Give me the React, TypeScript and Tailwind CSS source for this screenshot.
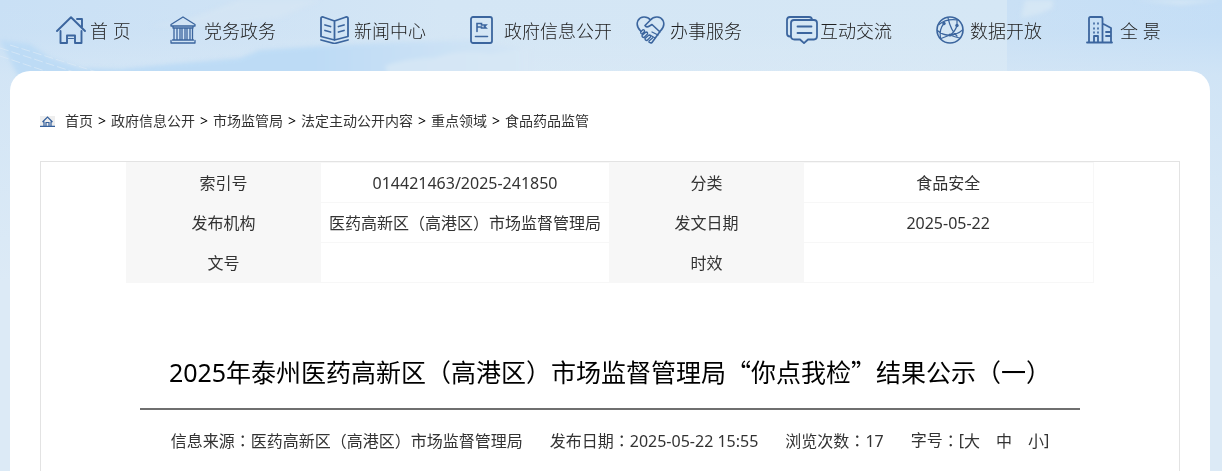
import { Fragment, type ReactNode } from "react";

function Icon({ width, children }: { width: number; children: ReactNode }) {
  return (
    <svg
      width={width}
      height={28}
      viewBox={`0 0 ${width} 28`}
      fill="none"
      stroke="#3b659e"
      strokeWidth={1.8}
      strokeLinecap="round"
      strokeLinejoin="round"
      aria-hidden="true"
    >
      {children}
    </svg>
  );
}

const HomeIcon = (
  <Icon width={30}>
    <path d="M1 15 15 1.2 29 15M21 3h5V11M4.500 15v12h6.500v-7.500h8V27h6.500V15" strokeWidth={1.9} />
    <path d="M12.500 22.500h5" strokeWidth={1} />
  </Icon>
);
const HallIcon = (
  <Icon width={26}>
    <path d="M1 8.500 13 1l12 7.500v1.500H1zM3 10v2h20v-2M4 12v12M7 12v12M10 12v12M12 12v12M15 12v12M17 12v12M20 12v12M22.500 12v12M2.500 24h21M1 24.500V27h24v-2.500" strokeWidth={1.3} />
  </Icon>
);
const BookIcon = (
  <Icon width={29}>
    <path d="M14.500 5 3 1Q1 .7 1 2.500V20.500l13.500 3.500L28 20.500V2.500Q28 .7 26 1zM14.500 5V24M5 9l5.500 1.500M5 14.500l5.500 1.500M24 9l-5.500 1.500M24 14.500 18.500 16M1 24l13.500 3.500L28 24" />
  </Icon>
);
const FlagIcon = (
  <Icon width={23}>
    <rect x="1" y="1" width="21" height="26" rx="2" />
    <path d="M7 15.500V7.500h4.500v1.500H16l-1.500 1.500L16 12h-4.500v-1H7M5.500 20.500h12" strokeLinejoin="miter" strokeWidth={1.6} />
  </Icon>
);
const HandshakeIcon = (
  <Icon width={29}>
    <path d="M14.500 4C11-.2 4.500.2 2 4.500-.2 9 1.500 12 5 15.500M14.500 4C18-.2 24.500.2 27 4.500c2.200 4.500.5 7.500-3 11L16 26.500q-1.500 1-3-.5M14.500 4 9 9.500q1.500 2.500 4.500.500L16 8.500l8 7.500" strokeWidth={1.6} />
    <path d="M5 15.500l2-1.800q1.800 0 1.500 1.800l-2.500 2.500Q4 17.500 5 15.500M6 19.500l4-3.500q2 0 1.500 2L8 21.500q-2 0-2-2M9 22.500l4-3.500q2 0 1.500 2L11 24.500q-2 0-2-2M13 25l3.500-3M16 16l6 3M14 19l5 3" strokeWidth={1.3} />
  </Icon>
);
const ChatIcon = (
  <Icon width={32}>
    <path d="M4 20.500Q1 20.500 1 17.500V4q0-3 3-3h19q3 0 3 3M8 4h20q3 0 3 3v13q0 3.500-3 3.500h-6L18 27.200 14 23.500H8.500Q5 23.500 5 20V7q0-3 3-3zM11.500 10.500h14M11.500 17h14" strokeWidth={1.8} />
  </Icon>
);
const GlobeIcon = (
  <Icon width={28}>
    <circle cx="14" cy="14" r="13" strokeWidth={1.6} />
    <path d="M3 8.500q7-6.500 19.500-4.500M8 7.500Q3 13 4.500 22M12 2q3 13 9 18M21 9.500Q19 16 14 19M21 9.500V3.500M1.500 14.500q5 5 12.500 4.500t12.500-5M14 19l-9 3.500M14 19q5 2 9.500 3" strokeWidth={1.2} />
    <g fill="#3b659e" stroke="none">
      <circle cx="8" cy="7.500" r="1.700" />
      <circle cx="21" cy="9.500" r="1.700" />
      <circle cx="14" cy="19" r="1.600" />
    </g>
  </Icon>
);
const BuildingIcon = (
  <Icon width={27}>
    <path d="M1 26.500h25M3 26V2.500Q3 1 4.500 1H15q1.500 0 1.500 1.500V26M16.500 7.500 25 12v14M20 16h5M20 20h5M8 26v-6h4v6" />
    <path d="M8 7v1M12 7v1M8 12v1M12 12v1M8 16v1M12 16v1" strokeWidth={1.6} />
  </Icon>
);

const NAV = [
  { label: "首 页", icon: HomeIcon },
  { label: "党务政务", icon: HallIcon },
  { label: "新闻中心", icon: BookIcon },
  { label: "政府信息公开", icon: FlagIcon },
  { label: "办事服务", icon: HandshakeIcon },
  { label: "互动交流", icon: ChatIcon },
  { label: "数据开放", icon: GlobeIcon },
  { label: "全 景", icon: BuildingIcon },
];

const CRUMBS = ["首页", "政府信息公开", "市场监管局", "法定主动公开内容", "重点领域", "食品药品监管"];

const ROWS = [
  ["索引号", "014421463/2025-241850", "分类", "食品安全"],
  ["发布机构", "医药高新区（高港区）市场监督管理局", "发文日期", "2025-05-22"],
  ["文号", "", "时效", ""],
];

function Backdrop() {
  return (
    <svg className="absolute inset-0 -z-10 h-full w-full" viewBox="0 0 1222 471" preserveAspectRatio="none" aria-hidden="true">
      <defs>
        <linearGradient id="sky" x1="0" x2="1" y1="0" y2="0">
          <stop offset="0" stopColor="#c9e0f5" />
          <stop offset=".22" stopColor="#cfe3f5" />
          <stop offset=".36" stopColor="#d4e6f5" />
          <stop offset=".824" stopColor="#d5e7f5" />
          <stop offset=".824" stopColor="#c9e0f5" />
          <stop offset="1" stopColor="#c4def6" />
        </linearGradient>
        <linearGradient id="haze" x1="0" x2="0" y1="0" y2="1">
          <stop offset="0" stopColor="#dceaf6" stopOpacity="0" />
          <stop offset=".07" stopColor="#dceaf6" stopOpacity=".05" />
          <stop offset=".16" stopColor="#dceaf6" stopOpacity=".5" />
          <stop offset=".6" stopColor="#dceaf6" />
        </linearGradient>
        <linearGradient id="deep" x1="0" x2="1" y1="0" y2="0">
          <stop offset="0" stopColor="#bddbf5" />
          <stop offset=".6" stopColor="#bddbf5" />
          <stop offset="1" stopColor="#d3e5f5" />
        </linearGradient>
        <filter id="soft" x="-10%" y="-50%" width="120%" height="200%">
          <feGaussianBlur stdDeviation="2" />
        </filter>
      </defs>
      <rect width="1222" height="471" fill="url(#sky)" />
      <rect width="1222" height="471" fill="url(#haze)" />
      <g filter="url(#soft)">
        <path d="M0 40 30 44 50 58 80 68 120 69 170 64 240 58 260 50 320 46 400 42 470 40 520 48V80H20z" fill="url(#deep)" />
        <path d="M385 66q20-8 50-8 25-10 55-4l40-6v32H390z" fill="#d7e7f5" opacity=".8" />
        <path d="M150 26l30-4 60-22h80l-40 18-60 8z" fill="#d5e5f3" opacity=".7" />
        <path d="M1025 0h28v8l-14 6-18 4zM1135 0h87l-40 5z" fill="#d8e8f5" opacity=".8" />
      </g>
      <path d="m0 48 80 26M0 56l60 20M10 45l90 28" stroke="#dceaf6" strokeDasharray="9 3" opacity=".7" />
    </svg>
  );
}

function Colon() {
  return <span className="font-['Noto_Sans_CJK_TC',sans-serif]">：</span>;
}

export default function App() {
  return (
    <div className="relative isolate flex min-h-screen flex-col bg-[#dceaf6] font-['Noto_Sans','Noto_Sans_CJK_SC',sans-serif] text-[#333]">
      <Backdrop />
      <nav className="grid grid-cols-[114fr_150fr_150fr_166fr_150fr_150fr_150fr_80fr] px-14 pt-4 pb-[27px]">
        {NAV.map((item) => (
          <a key={item.label} href="#" className="flex h-7 items-center text-lg leading-7 font-light whitespace-nowrap text-[#222]">
            <span className="w-[34px] shrink-0">{item.icon}</span>
            <span className="pt-0.5">{item.label}</span>
          </a>
        ))}
      </nav>

      <main className="mr-3 ml-2.5 flex flex-1 flex-col rounded-t-[20px] bg-white px-[30px] pt-10">
        <div className="flex h-5 items-center text-sm leading-5">
          <svg width="15" height="11" viewBox="0 0 15 11" className="mr-2.5 bg-[#eee]" fill="none" stroke="#35609c" strokeWidth="1.2" aria-hidden="true">
            <path d="M2.500 6 7.500 1l5 5M4 5.500V10M11 5.500V10M6 10V6.500h3V10M0 10.300h15" />
          </svg>
          {CRUMBS.map((crumb, i) => (
            <Fragment key={crumb}>
              {i > 0 && <span className="mx-[5px] text-black">&gt;</span>}
              <a href="#">{crumb}</a>
            </Fragment>
          ))}
        </div>

        <article className="mt-[30px] flex-1 border-x border-t border-[#e3e3e3]">
          <table className="mx-auto w-[85%] table-fixed border-collapse text-center text-base leading-6">
            <colgroup>
              <col className="w-1/5" />
              <col className="w-[30%]" />
              <col className="w-1/5" />
              <col className="w-[30%]" />
            </colgroup>
            <tbody>
              {ROWS.map((row) => (
                <tr key={row[0]} className="h-10">
                  {row.map((cell, i) =>
                    i % 2 === 0 ? (
                      <th key={i} scope="row" className="border border-[#f7f7f7] bg-[#f7f7f7] font-normal">
                        {cell}
                      </th>
                    ) : (
                      <td key={i} className="border border-[#f7f7f7] whitespace-nowrap">
                        {cell}
                      </td>
                    ),
                  )}
                </tr>
              ))}
            </tbody>
          </table>

          <div className="mx-[99px] mt-[68px]">
            <h1 className="border-b-2 border-[#6f6f6f] pb-4 text-center font-['Noto_Sans_CJK_SC',sans-serif] text-[25px] leading-10 text-black">
              <span className="font-['Noto_Sans',sans-serif]">2025</span>
              年泰州医药高新区（高港区）市场监督管理局“你点我检”结果公示（一）
            </h1>
            <div className="flex justify-center gap-[27px] pt-[18px] text-base leading-6 whitespace-nowrap">
              <span>
                信息来源
                <Colon />
                医药高新区（高港区）市场监督管理局
              </span>
              <span>
                发布日期
                <Colon />
                2025-05-22 15:55
              </span>
              <span>
                浏览次数
                <Colon />
                17
              </span>
              <span className="flex">
                字号
                <Colon />[
                <span className="flex gap-4">
                  <button type="button">大</button>
                  <button type="button">中</button>
                  <button type="button">小</button>
                </span>
                ]
              </span>
            </div>
          </div>
        </article>
      </main>
    </div>
  );
}
